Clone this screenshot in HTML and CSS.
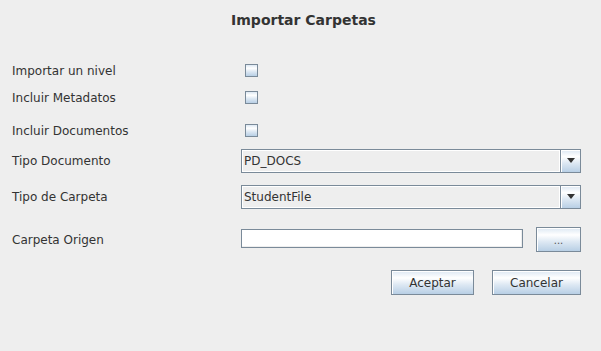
FILE: index.html
```html
<!DOCTYPE html>
<html lang="es">
<head>
<meta charset="utf-8">
<title>Importar Carpetas</title>
<link rel="stylesheet" href="styles.css">
</head>
<body>
<div class="dialog">
  <div class="title">Importar Carpetas</div>
  <div class="form">
    <div class="row row-check r1">
      <span class="label">Importar un nivel</span>
      <span class="checkbox"></span>
    </div>
    <div class="row row-check r2">
      <span class="label">Incluir Metadatos</span>
      <span class="checkbox"></span>
    </div>
    <div class="row row-check r3">
      <span class="label">Incluir Documentos</span>
      <span class="checkbox"></span>
    </div>
    <div class="row row-combo r4">
      <span class="label">Tipo Documento</span>
      <div class="combo">
        <span class="combo-value">PD_DOCS</span>
        <span class="combo-arrow"><span class="tri"></span></span>
      </div>
    </div>
    <div class="row row-combo r5">
      <span class="label">Tipo de Carpeta</span>
      <div class="combo">
        <span class="combo-value">StudentFile</span>
        <span class="combo-arrow"><span class="tri"></span></span>
      </div>
    </div>
    <div class="row row-path r6">
      <span class="label">Carpeta Origen</span>
      <div class="path">
        <span class="textfield"></span>
        <span class="btn btn-browse">...</span>
      </div>
    </div>
    <div class="actions">
      <span class="btn btn-ok">Aceptar</span>
      <span class="btn btn-cancel">Cancelar</span>
    </div>
  </div>
</div>
</body>
</html>
```

FILE: styles.css
```css
html, body {
  margin: 0;
  padding: 0;
}
body {
  width: 601px;
  height: 351px;
  background: #eeeeee;
  font-family: "DejaVu Sans", "Liberation Sans", sans-serif;
  font-size: 12px;
  color: #333333;
  overflow: hidden;
}
.dialog {
  display: flex;
  flex-direction: column;
}
.title {
  padding: 12px 0 0 6px;
  height: 17px;
  line-height: 17px;
  text-align: center;
  font-weight: bold;
  font-size: 14px;
  color: #333333;
}
.form {
  display: flex;
  flex-direction: column;
  padding: 0 20px 0 12px;
}
.row {
  display: grid;
  grid-template-columns: 229px 1fr;
  align-items: center;
}
.label {
  line-height: 14px;
  white-space: nowrap;
}
.row-check { height: 13px; }
.r1 { margin-top: 34px; }
.r2 { margin-top: 14px; }
.r3 { margin-top: 20px; }
.r4 { margin-top: 13px; }
.r5 { margin-top: 12px; }
.r6 { margin-top: 18px; }

.row-check .label { position: relative; top: 1px; }

.checkbox {
  display: block;
  box-sizing: border-box;
  width: 13px;
  height: 13px;
  margin-left: 4px;
  border: 1px solid #7a8a99;
  background: linear-gradient(to bottom, #dde8f3 0%, #ffffff 30%, #dde8f3 60%, #b8cfe5 100%);
}

.row-combo { height: 24px; }
.combo {
  display: flex;
  box-sizing: border-box;
  width: 340px;
  height: 24px;
  border: 1px solid #7a8a99;
}
.combo-value {
  flex: 1;
  box-sizing: border-box;
  border: 1px solid #ffffff;
  border-right: 1px solid #ffffff;
  padding-left: 1px;
  line-height: 20px;
  background: #eeeeee;
}
.combo-arrow {
  display: flex;
  align-items: center;
  justify-content: center;
  box-sizing: border-box;
  width: 20px;
  border-left: 1px solid #7a8a99;
  box-shadow: inset 1px 1px 0 #ffffff;
  background: linear-gradient(to bottom, #dde8f3 0%, #ffffff 30%, #dde8f3 60%, #b8cfe5 100%);
}
.tri {
  display: block;
  width: 0;
  height: 0;
  border-left: 4px solid transparent;
  border-right: 4px solid transparent;
  border-top: 5px solid #333333;
  margin-left: 1px;
  margin-top: -1px;
}

.row-path { height: 25px; }
.path {
  display: flex;
  align-items: flex-start;
  height: 25px;
}
.textfield {
  display: block;
  box-sizing: border-box;
  width: 282px;
  height: 19px;
  margin-top: 2px;
  border: 1px solid #7a8a99;
  box-shadow: inset -1px -1px 0 #eeeeee;
  background: #ffffff;
}
.btn {
  display: flex;
  align-items: center;
  justify-content: center;
  box-sizing: border-box;
  height: 25px;
  border: 1px solid #7a8a99;
  box-shadow: inset 1px 1px 0 #ffffff;
  background: linear-gradient(to bottom, #dde8f3 0%, #ffffff 30%, #dde8f3 60%, #b8cfe5 100%);
  color: #333333;
  font-size: 12px;
}
.btn-browse {
  width: 45px;
  margin-left: 13px;
  color: #555555;
  font-size: 10px;
  padding-top: 2px;
}
.actions {
  display: flex;
  justify-content: flex-end;
  gap: 18px;
  margin-top: 18px;
}
.btn-ok { width: 83px; }
.btn-cancel { width: 89px; }
```
